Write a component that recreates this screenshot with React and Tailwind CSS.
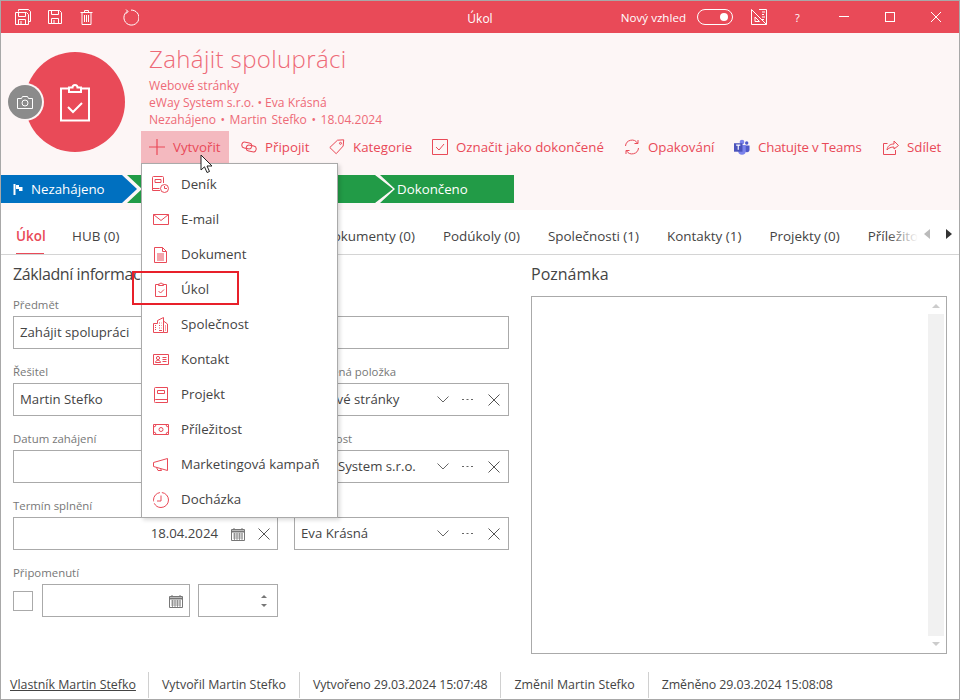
import React from 'react';

const S = ({ w = 16, h = 16, vb, className = '', children, sw = 1 }) => (
  <svg width={w} height={h} viewBox={vb || `0 0 ${w} ${h}`} fill="none" stroke="currentColor" strokeWidth={sw} className={`shrink-0 ${className}`}>{children}</svg>
);

const SaveAll = () => (<S w={16} h={16}><path d="M3.5 2.5V.5h10l2 2v10h-2" /><path d="M.5 3.5h11l2 2v10H.5z" /><path d="M3.5 3.5v4h7v-4M3.5 15.5v-5h7v5M6 12v3" /></S>);
const Save = () => (<S w={14} h={14}><path d="M.5.5h11l2 2v11H.5z" /><path d="M3.5.5v4h7v-4M3.5 13.5v-5h7v5M6 10v3" /></S>);
const Trash = () => (<S w={13} h={15}><path d="M.5 2.5h12M4.5 2.5v-2h4v2M2 2.5v12h9v-12M4.5 5v7M6.5 5v7M8.5 5v7" /></S>);
const Refresh = () => (<S w={17} h={17}><path d="M5.500 2.200A7.500 7.500 0 1 0 9 1.100" /><path d="M4 .5l2 2-2 2.200" /></S>);

const Plus = () => (<S w={16} h={16} sw={1.200}><path d="M8 0v16M0 8h16" /></S>);
const LinkI = () => (<S w={16} h={12}><rect x="0.800" y="1.500" width="10" height="6" rx="3" transform="rotate(12 5.800 4.500)" /><rect x="5.200" y="4.500" width="10" height="6" rx="3" transform="rotate(12 10.200 7.500)" /></S>);
const Tag = () => (<S w={16} h={16}><path d="M.8 8.500L8.500 1.200l6.200-.4-.5 6.200-7 7.700z" /><circle cx="11.500" cy="4.300" r="1" /></S>);
const Check = () => (<S w={16} h={16}><path d="M.5.5h15v15H.5z" /><path d="M4 8l3 3 5-6" /></S>);
const Sync = () => (<S w={16} h={16}><path d="M1.500 7A6.500 6.500 0 0 1 13.500 4.200M14.500 9A6.500 6.500 0 0 1 2.500 11.800" /><path d="M14 1v3.500h-3.500M2 15v-3.500h3.500" /></S>);
const Teams = () => (
  <svg width="16" height="16" viewBox="0 0 17 16" className="shrink-0">
    <circle cx="13.500" cy="3.800" r="1.800" fill="#5059c9" />
    <path d="M11 6.500h5.500v4.200a2.700 2.700 0 0 1-5.500 0z" fill="#5059c9" />
    <circle cx="8.500" cy="2.800" r="2.500" fill="#7b83eb" />
    <path d="M4.500 6h8v6.200a4 4 0 0 1-8 0z" fill="#7b83eb" />
    <rect x="0" y="4" width="9" height="9" fill="#4b53bc" />
    <path d="M2.300 6h4.400M4.500 6v5" stroke="#fff" strokeWidth="1.200" />
  </svg>
);
const Share = () => (<S w={16} h={16}><path d="M4.500 4.500H.5v11h12V11" /><path d="M4 11c.5-4 3-6 7-6V2l4.500 4.500L11 10V8C8 8 5.500 9 4 11z" /></S>);

const Denik = () => (<S w={17} h={17}><path d="M8 14.500H.5V1.500a1 1 0 0 1 1-1h9a1 1 0 0 1 1 1V7" /><path d="M.5 12.500h7M3 3.500h6v3H3z" /><circle cx="12.500" cy="12.500" r="4" /><path d="M12.500 10v2.500h2.500" /></S>);
const Mail = () => (<S w={16} h={11}><path d="M.5.500h15v10H.5zM.5.500L8 6.500l7.500-6" /></S>);
const Doc = () => (<S w={13} h={16}><path d="M.5.500h8l4 4v11H.5zM8.500.500v4h4M3 7h7M3 9h7M3 11h7M3 13h7" /></S>);
const Ukol = () => (<S w={12} h={15}><path d="M3.500 2.500H.5v12h11v-12h-3M3.500 3.500V2H5a1 1 0 0 1 2 0h1.500v1.500z" /><path d="M3.500 9l2 2 3.500-3.500" /></S>);
const Firm = () => (<S w={15} h={16}><path d="M.5 15.500v-9h4v-3l6-3v15zM10.500 4l4 3v8.500h-4M2 8.500h1M2 10.500h1M2 12.500h1M6 6h1M8.500 6h.5M6 8.500h1M8.500 8.500h.5M6 11h1M8.500 11h.5M6 13.500h3M12 9h1M12 11h1M12 13h1" /></S>);
const Contact = () => (<S w={16} h={11}><path d="M.5.500h15v10H.5z" /><circle cx="5" cy="4" r="1.600" /><path d="M2.500 8.500c0-3 5-3 5 0zM9.500 3.500h4M9.500 5.500h4M9.500 7.500h4" /></S>);
const Proj = () => (<S w={14} h={16}><path d="M13.500 12.500h-12a1 1 0 0 0 0 3h12V.5h-12a1 1 0 0 0-1 1V14" /><path d="M3.500 3.500h7v3h-7z" /></S>);
const Money = () => (<S w={16} h={11}><path d="M.5.500h15v10H.5z" /><circle cx="8" cy="5.500" r="2" /><path d="M.5 3a2.500 2.500 0 0 0 2.500-2.500M15.500 3A2.500 2.500 0 0 1 13 .5M.5 8A2.500 2.500 0 0 1 3 10.500M15.500 8a2.500 2.500 0 0 0-2.500 2.500" /></S>);
const Mega = () => (<S w={15} h={13}><path d="M.5 4.500l14-4v12l-14-4zM3.500 9.500L5 12.500h3.500l-1-2" /></S>);
const Clock = () => (<S w={16} h={16}><circle cx="8" cy="8" r="7.500" strokeDasharray="20 2 12 2" /><path d="M8 3.500V9H4" /></S>);

const Cal = () => (
  <S w={14} h={14} className="text-[#777]">
    <path d="M.5 2.500h13v11H.5zM3 1v2M11 1v2" />
    <path d="M.5 4.500h13" strokeWidth="2" />
    <path d="M2 7h10M2 9h10M2 11h10M3.500 6v7M6 6v7M8.500 6v7M11 6v7" strokeWidth=".7" />
  </S>
);
const X = () => (<S w={12} h={12} className="text-[#555]"><path d="M.5.500l11 11M11.500.500l-11 11" /></S>);
const Chev = () => (<S w={12} h={7} className="text-[#666]"><path d="M.5.500l5.500 5.500 5.500-5.500" /></S>);
const Dots = () => (<S w={11} h={3} sw={1.200} className="text-[#666]"><path d="M0 1.500h2M4.500 1.500h2M9 1.500h2" /></S>);

const actions = [
  ['Vytvořit', Plus, 'w-[48px]'],
  ['Připojit', LinkI, 'w-[44px]'],
  ['Kategorie', Tag, 'w-[59px]'],
  ['Označit jako dokončené', Check, 'w-[148px]'],
  ['Opakování', Sync, 'w-[66px]'],
  ['Chatujte v Teams', Teams, 'w-[105px] tracking-[-0.2px]'],
  ['Sdílet', Share, 'w-[34px]'],
];

const menu = [
  ['Deník', Denik], ['E-mail', Mail], ['Dokument', Doc], ['Úkol', Ukol], ['Společnost', Firm],
  ['Kontakt', Contact], ['Projekt', Proj], ['Příležitost', Money], ['Marketingová kampaň', Mega], ['Docházka', Clock],
];

const tabs = ['HUB (0)', 'Deník (0)', 'E-maily (0)', 'Dokumenty (0)', 'Podúkoly (0)', 'Společnosti (1)', 'Kontakty (1)', 'Projekty (0)', 'Příležitosti (0)'];

function Field({ label, span, children }) {
  return (
    <div className={span ? 'col-span-2' : ''}>
      <div className="h-[34px] pt-[15px] text-[11.400px] leading-[16px] text-[#777] whitespace-nowrap">{label}</div>
      {children}
    </div>
  );
}

function Box({ value, right, children, className = '' }) {
  return (
    <div className={`h-[33px] border border-[#aaaaaa] flex items-center pl-[6px] text-[#444] text-[13.200px] ${className}`}>
      <span className={`flex-1 whitespace-nowrap ${right ? 'text-right' : ''}`}>{value}</span>
      {children}
    </div>
  );
}

const Lookup = () => (
  <div className="flex items-center pl-[8px] pr-[8px]">
    <Chev />
    <span className="ml-[13px]"><Dots /></span>
    <span className="ml-[15px]"><X /></span>
  </div>
);

const DateCtl = () => (
  <div className="flex items-center pl-[13px] pr-[7px]">
    <Cal />
    <span className="ml-[13px]"><X /></span>
  </div>
);

export default function App() {
  return (
    <div className="relative w-[960px] h-[700px] overflow-hidden bg-white border border-[#a8a8a8] font-['Open_Sans','Noto_Sans',sans-serif] flex flex-col">
      {/* title bar */}
      <div className="h-[32px] shrink-0 bg-[#e94a58] text-white grid grid-cols-[1fr_auto_1fr] items-center text-[12px]">
        <div className="flex items-center pl-[14px]">
          <SaveAll />
          <span className="ml-[17px]"><Save /></span>
          <span className="ml-[18px]"><Trash /></span>
          <span className="ml-[29px]"><Refresh /></span>
        </div>
        <div className="pt-[3px]">Úkol</div>
        <div className="flex items-center justify-end">
          <span className="whitespace-nowrap pt-[2px] text-[11.600px]">Nový vzhled</span>
          <span className="ml-[11px] w-[36px] h-[16px] rounded-full border border-white flex items-center justify-end pr-[4px]">
            <span className="w-[8px] h-[8px] rounded-full bg-white" />
          </span>
          <span className="ml-[18px]">
            <S w={16} h={16}><path d="M.5.5l15 15H.5zM4 8v4.500h4.500zM8 .5h7.500v15M11 3h3M11 5.500h2M11 8h3M11 10.500h2" /></S>
          </span>
          <span className="ml-[28px] w-[6px] text-[11px] pt-[2px]">?</span>
          <span className="ml-[38px] w-[10px] h-px bg-white" />
          <span className="ml-[36px] w-[10px] h-[10px] border border-white" />
          <span className="ml-[36px] mr-[18px]"><S w={10} h={10}><path d="M0 0l10 10M10 0L0 10" /></S></span>
        </div>
      </div>

      {/* header */}
      <div className="h-[177px] shrink-0 bg-[#fdf6f6] flex flex-col">
        <div className="flex">
          <div className="relative ml-[24px] mt-[19px] w-[100px] h-[100px] rounded-full bg-[#e94a58] flex items-center justify-center text-white shrink-0">
            <S w={30} h={40} sw={2}><path d="M8 6.500H1v32h28v-32h-7" /><path d="M9 10V5.500h3.500a2.500 2.500 0 0 1 5 0H21V10z" /><path d="M8 25l5 5 9-9" /></S>
            <div className="absolute left-[-17px] top-[33px] w-[34px] h-[34px] rounded-full bg-[#8b8b8b] ring-2 ring-[#fdf6f6] flex items-center justify-center text-white">
              <S w={16} h={13}><path d="M.5 2.500h4l1-2h5l1 2h4v10H.5z" /><circle cx="8" cy="7" r="3" /></S>
            </div>
          </div>
          <div className="ml-[24px] pt-[8px] text-[#ee6a77]">
            <div className="text-[24px] leading-[36px] font-light tracking-[.38px] h-[36px] whitespace-nowrap">Zahájit spolupráci</div>
            <div className="text-[12.100px] leading-[17px]">Webové stránky</div>
            <div className="text-[12.100px] leading-[17px]">eWay System s.r.o. • Eva Krásná</div>
            <div className="text-[12.100px] leading-[17px] [word-spacing:1.400px]">Nezahájeno • Martin Stefko • 18.04.2024</div>
            <div className="flex gap-[4px] -ml-[8px] mt-[3px] text-[#e94a58] text-[13.300px]">
              {actions.map(([t, I, w], i) => (
                <div key={t} className={`h-[32px] px-[8px] flex items-center gap-[8px] whitespace-nowrap ${i === 0 ? 'bg-[#f4b9bf]' : ''}`}>
                  <span className="w-[16px] flex justify-center"><I /></span>
                  <span className={`${w} pt-[1px]`}>{t}</span>
                </div>
              ))}
            </div>
          </div>
        </div>
        <div className="flex mt-[12px] h-[28px] text-white text-[13.300px] leading-[28px]">
          <div className="w-[136px] bg-[#0070c0] pl-[12px] flex items-center [clip-path:polygon(0_0,121px_0,136px_14px,121px_28px,0_28px)]">
            <S w={10} h={11} className="mr-[8px]"><path d="M1.500 0v11" strokeWidth="2" /><path d="M3 1h3v2h3.500v4H6V5H3z" fill="currentColor" stroke="none" /></S>
            Nezahájeno
          </div>
          <div className="w-[266px] -ml-[10px] bg-[#229b47] [clip-path:polygon(0_0,248px_0,266px_14px,248px_28px,0_28px,15px_14px)]" />
          <div className="w-[134px] -ml-[13px] bg-[#229b47] pl-[17px] [clip-path:polygon(0_0,134px_0,134px_28px,0_28px,15px_14px)]">Dokončeno</div>
        </div>
      </div>

      {/* tabs */}
      <div className="h-[45px] shrink-0 border-b border-[#d4d4d4] flex items-stretch text-[13.450px] text-[#444]">
        <div className="w-[917px] overflow-hidden flex gap-[28px] pl-[15px] items-stretch relative whitespace-nowrap">
          <div className="flex items-center pt-[10px] font-semibold text-[#e94a58] border-b-2 border-[#e94a58] h-[45px] w-[28px]">Úkol</div>
          {tabs.map((t) => (<div key={t} className="flex items-center pt-[8px] h-[45px]">{t}</div>))}
          <div className="absolute right-0 top-0 w-[30px] h-full bg-gradient-to-r from-transparent to-white" />
        </div>
        <div className="flex items-center pt-[3px] ml-[6px]">
          <S w={6} h={10} className="text-[#bbb]"><path d="M6 0v10L0 5z" fill="currentColor" stroke="none" /></S>
          <span className="ml-[16px]"><S w={6} h={10} className="text-[#333]"><path d="M0 0v10l6-5z" fill="currentColor" stroke="none" /></S></span>
        </div>
      </div>

      {/* content */}
      <div className="flex-1 flex min-h-0">
        <div className="w-[530px] pl-[12px] shrink-0">
          <div className="h-[40px] pt-[8px] text-[16px] leading-[22px] tracking-[-0.4px] text-[#444] whitespace-nowrap">Základní informace</div>
          <div className="-mt-[13px] grid grid-cols-[265px_215px] gap-x-[16px] gap-y-0">
            <Field label="Předmět" span><Box value="Zahájit spolupráci" /></Field>
            <Field label="Řešitel"><Box value="Martin Stefko"><Lookup /></Box></Field>
            <Field label="Nadřazená položka"><Box value="Webové stránky"><Lookup /></Box></Field>
            <Field label="Datum zahájení"><Box value=""><DateCtl /></Box></Field>
            <Field label="Společnost"><Box value="eWay System s.r.o."><Lookup /></Box></Field>
            <Field label="Termín splnění"><Box value="18.04.2024" right><DateCtl /></Box></Field>
            <Field label="Kontakt"><Box value="Eva Krásná"><Lookup /></Box></Field>
            <Field label="Připomenutí">
              <div className="flex items-center">
                <span className="w-[20px] h-[20px] border border-[#aaaaaa]" />
                <div className="ml-[9px] w-[148px] h-[33px] border border-[#aaaaaa] flex items-center justify-end pr-[6px]"><Cal /></div>
                <div className="ml-[8px] w-[80px] h-[33px] border border-[#aaaaaa] flex flex-col items-end justify-center gap-[6px] pr-[10px]">
                  <S w={6} h={3} className="text-[#777]"><path d="M0 3l3-3 3 3z" fill="currentColor" stroke="none" /></S>
                  <S w={6} h={3} className="text-[#777]"><path d="M0 0l3 3 3-3z" fill="currentColor" stroke="none" /></S>
                </div>
              </div>
            </Field>
          </div>
        </div>
        <div className="flex-1 pr-[12px] flex flex-col">
          <div className="h-[41px] pt-[8px] text-[16px] leading-[22px] text-[#444]">Poznámka</div>
          <div className="w-[416px] h-[358px] border border-[#aaaaaa] flex justify-end p-px">
            <div className="w-[16px] mr-[1px] h-full bg-[#f1f1f1] flex flex-col justify-between">
              <div className="h-[16px] bg-white flex items-center justify-center"><S w={8} h={4} className="text-[#ccc]"><path d="M0 4l4-4 4 4z" fill="currentColor" stroke="none" /></S></div>
              <div className="h-[16px] bg-white flex items-center justify-center"><S w={8} h={4} className="text-[#ccc]"><path d="M0 0l4 4 4-4z" fill="currentColor" stroke="none" /></S></div>
            </div>
          </div>
        </div>
      </div>

      {/* footer */}
      <div className="h-[26px] mb-px shrink-0 flex items-stretch text-[12.400px] text-[#444] whitespace-nowrap">
        <div className="pl-[9px] pr-[12px] flex items-center border-r border-[#d0d0d0] underline">Vlastník Martin Stefko</div>
        <div className="px-[13px] flex items-center border-r border-[#d0d0d0]">Vytvořil Martin Stefko</div>
        <div className="px-[13px] flex items-center border-r border-[#d0d0d0] tracking-[-0.1px]">Vytvořeno 29.03.2024 15:07:48</div>
        <div className="px-[13px] flex items-center border-r border-[#d0d0d0]">Změnil Martin Stefko</div>
        <div className="px-[13px] flex items-center tracking-[-0.1px]">Změněno 29.03.2024 15:08:08</div>
      </div>

      {/* dropdown */}
      <div className="absolute left-[140px] top-[162px] w-[197px] h-[355px] bg-white border border-[#aaaaaa] shadow-[2px_2px_4px_rgba(0,0,0,0.15)] py-[3px]">
        {menu.map(([t, I]) => (
          <div key={t} className="h-[35px] flex items-center text-[13.300px] text-[#444] whitespace-nowrap">
            <span className="w-[39px] pl-[10px] text-[#e94a58] flex justify-start"><span className="w-[17px] flex justify-center"><I /></span></span>
            {t}
          </div>
        ))}
      </div>

      {/* highlight */}
      <div className="absolute left-[131px] top-[270px] w-[107px] h-[34px] border-2 border-[#e8202a]" />

      {/* cursor */}
      <svg width="14" height="21" viewBox="0 0 14 21" className="absolute left-[199px] top-[153px]">
        <path d="M1 1v15l3.500-3.200L7 18.500l2.500-1-2.500-5.500h5z" fill="#fff" stroke="#222" strokeWidth="1" />
      </svg>
    </div>
  );
}
